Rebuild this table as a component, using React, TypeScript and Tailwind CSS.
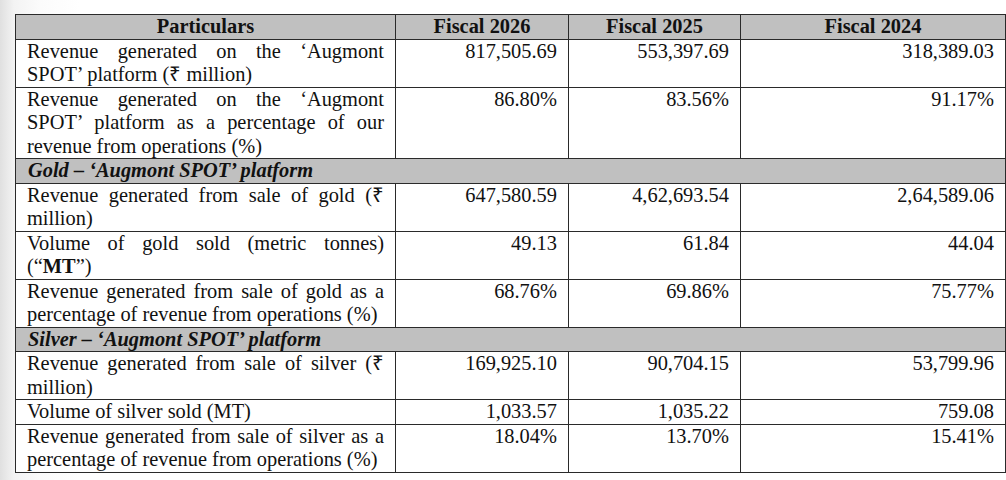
import React from 'react';

type Row =
  | { kind: 'section'; label: string }
  | { kind: 'data'; label: React.ReactNode; values: [string, string, string] };

const rows: Row[] = [
  {
    kind: 'data',
    label: 'Revenue generated on the ‘Augmont SPOT’ platform (₹ million)',
    values: ['817,505.69', '553,397.69', '318,389.03'],
  },
  {
    kind: 'data',
    label: 'Revenue generated on the ‘Augmont SPOT’ platform as a percentage of our revenue from operations (%)',
    values: ['86.80%', '83.56%', '91.17%'],
  },
  { kind: 'section', label: 'Gold – ‘Augmont SPOT’ platform' },
  {
    kind: 'data',
    label: 'Revenue generated from sale of gold (₹ million)',
    values: ['647,580.59', '4,62,693.54', '2,64,589.06'],
  },
  {
    kind: 'data',
    label: (
      <>
        Volume of gold sold (metric tonnes) (“<b>MT</b>”)
      </>
    ),
    values: ['49.13', '61.84', '44.04'],
  },
  {
    kind: 'data',
    label: 'Revenue generated from sale of gold as a percentage of revenue from operations (%)',
    values: ['68.76%', '69.86%', '75.77%'],
  },
  { kind: 'section', label: 'Silver – ‘Augmont SPOT’ platform' },
  {
    kind: 'data',
    label: 'Revenue generated from sale of silver (₹ million)',
    values: ['169,925.10', '90,704.15', '53,799.96'],
  },
  {
    kind: 'data',
    label: 'Volume of silver sold (MT)',
    values: ['1,033.57', '1,035.22', '759.08'],
  },
  {
    kind: 'data',
    label: 'Revenue generated from sale of silver as a percentage of revenue from operations (%)',
    values: ['18.04%', '13.70%', '15.41%'],
  },
];

const cell = "border border-[#2a2a2a] px-[11px] py-0 font-['Liberation_Serif','Times_New_Roman',serif]";

export default function App() {
  return (
    <div className="w-[1006px] h-[480px] overflow-hidden bg-[linear-gradient(to_right,#e0e0e0,#f3f3f3_14px,#fbfbfb_40px,#ffffff_80px)] pt-[14px] pl-[15px] text-[#111] text-[20.4px] leading-[23.5px] font-['Liberation_Serif','Times_New_Roman',serif]">
      <table className="w-[990px] table-fixed border-collapse bg-white text-[20.4px] leading-[23.5px] font-['Liberation_Serif','Times_New_Roman',serif]">
        <colgroup>
          <col className="w-[380px]" />
          <col className="w-[173px]" />
          <col className="w-[172px]" />
          <col className="w-[265px]" />
        </colgroup>
        <thead>
          <tr className="bg-[#c0c0c0]">
            {['Particulars', 'Fiscal 2026', 'Fiscal 2025', 'Fiscal 2024'].map(h => (
              <th key={h} className={`${cell} text-center font-bold`}>
                {h}
              </th>
            ))}
          </tr>
        </thead>
        <tbody>
          {rows.map((r, i) =>
            r.kind === 'section' ? (
              <tr key={i} className="bg-[#c0c0c0]">
                <td colSpan={4} className={`${cell} pl-[12px] font-bold italic`}>
                  {r.label}
                </td>
              </tr>
            ) : (
              <tr key={i}>
                <td className={`${cell} align-top text-justify`}>{r.label}</td>
                {r.values.map((v, j) => (
                  <td key={j} className={`${cell} align-top text-right`}>
                    {v}
                  </td>
                ))}
              </tr>
            )
          )}
        </tbody>
      </table>
    </div>
  );
}
